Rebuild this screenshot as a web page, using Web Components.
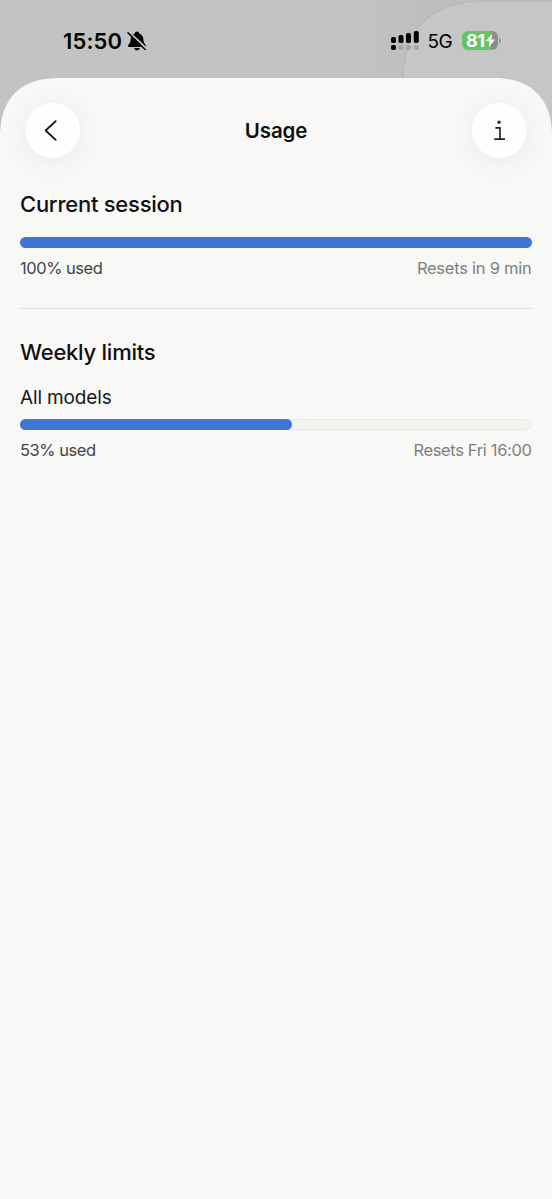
<!DOCTYPE html>
<html lang="en">
<head>
<meta charset="utf-8">
<title>Usage</title>
<style>
html,body{margin:0;height:100%;overflow:hidden;background:#c2c2c0;font-family:Inter,"Liberation Sans",sans-serif}
</style>
</head>
<body>
<usage-screen></usage-screen>
<script>
const define = (name, html) => customElements.define(name, class extends HTMLElement {
  constructor() {
    super();
    const t = document.createElement('template');
    t.innerHTML = html;
    this.attachShadow({mode: 'open'}).append(t.content.cloneNode(true));
  }
});

define('status-bar', `
<style>
:host{display:block;position:relative;height:78px;color:#050505}
.back{position:absolute;inset:0;width:552px;height:150px}
.row{position:relative;display:flex;align-items:center;padding:0 54.5px 0 63px;height:81px}
.time{font-size:22px;font-weight:600;letter-spacing:.15px;line-height:26px;width:64px;white-space:nowrap;padding-top:1px}
.space{flex:1}
.net{font-size:19px;line-height:24px;letter-spacing:-.5px;width:25px;margin:3px 9px 0 9px;white-space:nowrap}
.battery{display:flex;align-items:center;width:36px;height:19px;border-radius:6px;background:linear-gradient(90deg,#65c466 0 29px,#8d8d8d 29px);color:#fff;position:relative}
.num{font-size:18px;font-weight:700;line-height:19px;letter-spacing:-.4px;margin-left:4.5px}
.bolt{position:absolute;left:23.5px;top:2px}
.cap{position:absolute;left:37px;top:7px;width:2px;height:5px;border-radius:0 2px 2px 0;background:#929292}
svg{display:block}
</style>
<svg class="back" viewBox="0 0 552 150"><defs><linearGradient id="g" x2="1"><stop stop-color="#c3c3c1"/><stop offset=".65" stop-color="#c2c2c0"/><stop offset=".78" stop-color="#bebebd"/></linearGradient></defs><path fill="url(#g)" d="M0 0h552v150H0z"/><path d="M403 150V78C404 33 428 1 484 1H560V150Z" fill="#c6c6c6" stroke="#b5b5b4"/></svg>
<div class="row"><span class="time">15:50</span>
<svg width="20" height="20" viewBox="0 0 20 20"><path d="M10 .6C8.6.6 7.8 1.5 7.8 2.4 4.8 3.4 3.7 5.8 3.6 8.6 3.5 11.3 2.7 12.5 1.3 14c-.7.8-.4 1.9.7 1.9h16c1.1 0 1.4-1.1.7-1.9-1.4-1.5-2.2-2.7-2.3-5.4-.1-2.8-1.2-5.2-4.2-6.2C12.2 1.5 11.4.6 10 .6ZM7.2 17h5.6c-.3 1.6-1.3 2.3-2.8 2.3s-2.5-.7-2.8-2.3Z" fill="#050505"/><path d="M1.8 1 18.8 17.2" stroke="#c2c2c0" stroke-width="2.4"/><path d="M1 1.9 18.2 18.5" stroke="#050505" stroke-width="1.5" stroke-linecap="round"/></svg>
<span class="space"></span>
<svg width="28" height="20" viewBox="0 0 28 20"><g fill="#050505"><rect y="6" width="5" height="6" rx="1.8"/><rect x="7.5" y="4" width="5" height="8" rx="1.8"/><rect x="15" y="2" width="5" height="10" rx="1.8"/><rect x="22.8" width="5" height="12" rx="1.8"/><rect y="14" width="5" height="5" rx="1.8"/></g><g fill="#a5a5a5"><rect x="7.5" y="14" width="5" height="5" rx="1.8"/><rect x="15" y="14" width="5" height="5" rx="1.8"/><rect x="22.8" y="14" width="5" height="5" rx="1.8"/></g></svg>
<span class="net">5G</span>
<div class="battery"><span class="num">81</span><svg class="bolt" width="11" height="15" viewBox="0 0 11 15"><path d="M7.3.7.8 8.2h4L3.6 14.2l6.5-7.7H6.2Z" fill="#fff"/></svg><i class="cap"></i></div></div>`);

define('round-button', `
<style>
:host{display:flex;align-items:center;justify-content:center;width:55px;height:55px;border-radius:50%;background:#fefefd;box-shadow:0 4px 28px rgba(0,0,0,.065)}
</style><slot></slot>`);

define('sheet-header', `
<style>
:host{display:flex;align-items:center;justify-content:space-between;height:56px;padding:24px 25px 0 25px}
.title{font-size:20.5px;font-weight:600;line-height:28px;letter-spacing:-.15px;color:#111;padding-top:2px}
svg{display:block}
</style>
<round-button><svg width="56" height="56" viewBox="0 0 56 56"><path d="M31.3 19 21 28.5 31.3 38" fill="none" stroke="#111" stroke-width="1.8" stroke-linecap="round" stroke-linejoin="round"/></svg></round-button>
<span class="title"><slot></slot></span>
<round-button><svg width="56" height="56" viewBox="0 0 56 56"><circle cx="27.5" cy="20" r="1.7" fill="#222"/><path d="M23.8 25.8h4.7v10.9M22.6 37.3h11" fill="none" stroke="#222" stroke-width="1.7"/></svg></round-button>`);

define('section-title', `
<style>:host{display:block;font-size:22px;font-weight:500;line-height:28px;color:#111;letter-spacing:-.25px}</style><slot></slot>`);

customElements.define('usage-meter', class extends HTMLElement {
  constructor() {
    super();
    this.attachShadow({mode: 'open'}).innerHTML = `
<style>
:host{display:block}
.track{height:11px;box-sizing:border-box;border-radius:6px;background:#f3f3f0;border:1px solid #e8e8e4}
.fill{height:11px;margin:-1px;border-radius:6px;background:#4075d3}
.info{display:flex;justify-content:space-between;margin-top:8px;font-size:16.5px;line-height:24px;color:#444}
.reset{color:#80807d;letter-spacing:var(--right,-.25px);margin-right:.5px}
.left{letter-spacing:-.46px}
</style>
<div class="track"><div class="fill" style="width:${this.getAttribute('width')}"></div></div>
<div class="info"><span class="left"><slot name="used"></slot></span><span class="reset"><slot name="reset"></slot></span></div>`;
  }
});

define('usage-screen', `
<style>
:host{display:block;width:552px;height:1199px;overflow:hidden}
.sheet{position:relative;height:1121px;background:#f8f8f6;clip-path:path("M0 1121V56C1 20 21 0 58 0H494C531 0 551 20 552 56V1121Z")}
.body{padding:32px 20px 0}
hr{height:1px;border:0;background:#e1e1de;margin:28px 0 29px}
.model{font-size:19px;line-height:26px;color:#191919;margin:19px 0 8px;letter-spacing:-.15px}
</style>
<status-bar></status-bar>
<div class="sheet">
<sheet-header>Usage</sheet-header>
<div class="body">
<section-title>Current session</section-title>
<usage-meter width="512px" style="margin-top:19px"><span slot="used">100% used</span><span slot="reset">Resets in 9 min</span></usage-meter>
<hr>
<section-title>Weekly limits</section-title>
<div class="model">All models</div>
<usage-meter width="272px" style="--right:-.36px"><span slot="used">53% used</span><span slot="reset">Resets Fri 16:00</span></usage-meter>
</div></div>`);
</script>
</body>
</html>
